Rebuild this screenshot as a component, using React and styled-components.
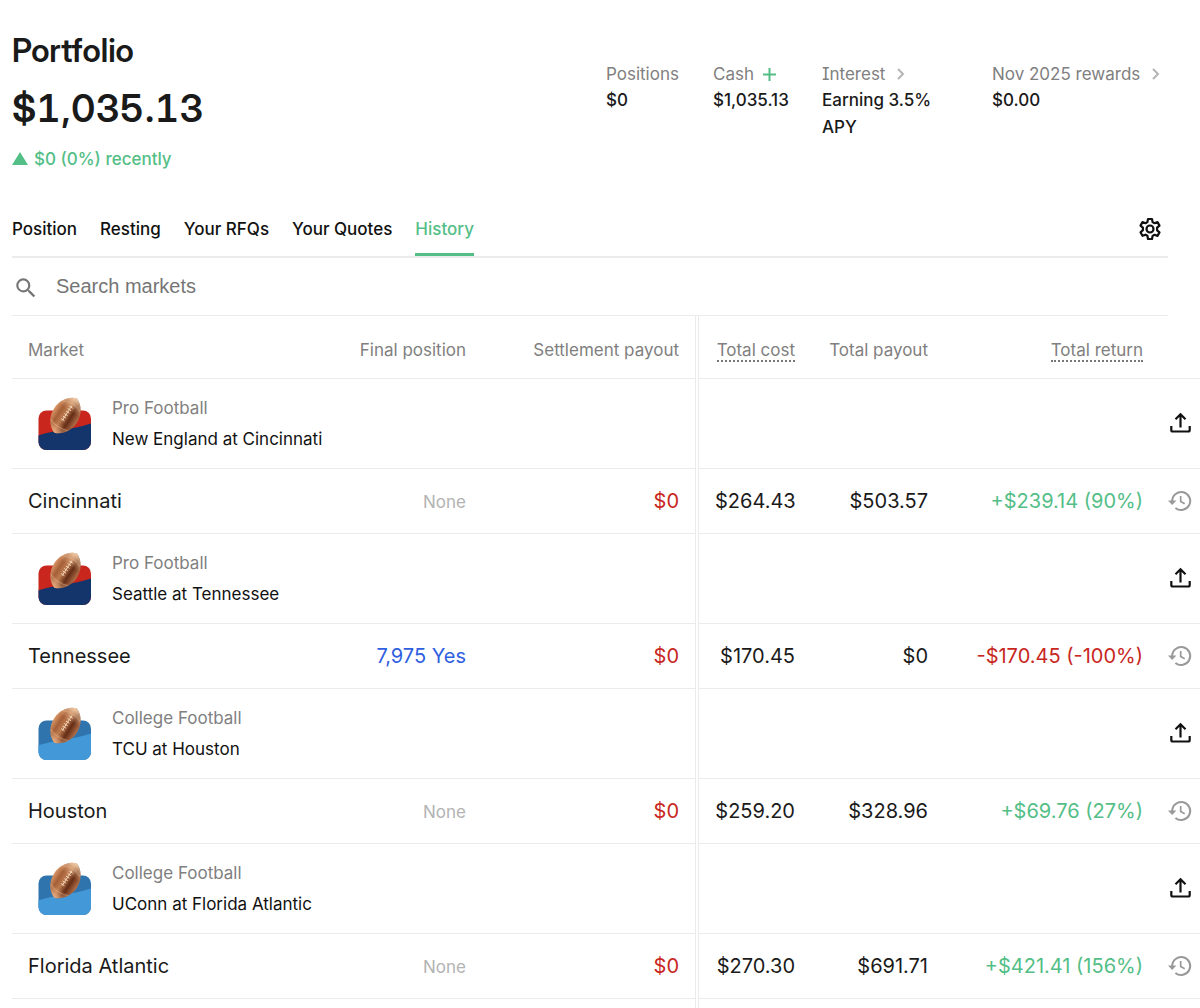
import React, { useId } from "react";
import styled, { createGlobalStyle } from "styled-components";

const GlobalStyle = createGlobalStyle`
  * {
    box-sizing: border-box;
  }
  body {
    margin: 0;
    background: #fff;
    color: #1a1a1a;
    font-family: Inter, "Liberation Sans", sans-serif;
    font-feature-settings: "cv08";
    font-size: 17px;
    line-height: 26px;
    overflow-x: hidden;
  }
  button, input {
    font: inherit;
    font-feature-settings: inherit;
    color: inherit;
    border: none;
    background: none;
    padding: 0;
  }
  h1, p, dl, dd {
    margin: 0;
  }
`;

const green = "#54be87";
const red = "#c8271e";
const gray = "#808080";
const line = "#ebebeb";

const Page = styled.main`
  padding-left: 12px;
`;

const Top = styled.div`
  margin-right: 32px;
`;

const Header = styled.header`
  display: flex;
  justify-content: space-between;
  padding-top: 30px;
`;

const Title = styled.h1`
  font-family: "Inter Display", Inter, sans-serif;
  font-size: 32px;
  line-height: 42px;
  font-weight: 600;
`;

const Balance = styled.p`
  font-family: "Inter Display", Inter, sans-serif;
  font-size: 38px;
  line-height: 56px;
  margin-top: 8px;
  font-weight: 600;
  font-variant-numeric: tabular-nums;
`;

const Change = styled.p`
  display: flex;
  align-items: center;
  gap: 6px;
  margin-top: 10px;
  font-weight: 500;
  color: ${green};
  svg {
    margin-bottom: 2px;
  }
`;

const Stats = styled.dl`
  display: flex;
  gap: 32px;
  padding-top: 31px;
`;

const Stat = styled.div`
  width: ${(props) => props.$width || "auto"};
`;

const StatLabel = styled.dt`
  display: flex;
  align-items: center;
  gap: 8px;
  color: ${gray};
  white-space: nowrap;
`;

const StatValue = styled.dd`
  line-height: 27px;
  font-weight: 500;
`;

const IconButton = styled.button`
  display: flex;
  align-items: center;
  justify-content: center;
  cursor: pointer;
  color: ${(props) => props.$color || "#111"};
`;

const Toolbar = styled.div`
  display: flex;
  justify-content: space-between;
  align-items: flex-start;
  margin-top: 43px;
  border-bottom: 2px solid ${line};
  height: 43px;
`;

const Tabs = styled.nav`
  display: flex;
  gap: 23px;
`;

const Tab = styled.button`
  height: 41px;
  padding-bottom: 10px;
  font-weight: 500;
  cursor: pointer;
  color: ${(props) => (props.$active ? green : "#111")};
  border-bottom: 3px solid ${(props) => (props.$active ? green : "transparent")};
`;

const Settings = styled(IconButton)`
  margin: 2px 6px 0 0;
`;

const Search = styled.label`
  display: flex;
  align-items: center;
  gap: 17px;
  height: 58px;
  padding-left: 1px;
  border-bottom: 1px solid ${line};
  color: #757575;
`;

const SearchInput = styled.input`
  flex: 1;
  min-width: 0;
  padding-bottom: 2px;
  font-family: "Liberation Sans", Arial, sans-serif;
  font-size: 20px;
  outline: none;
  &::placeholder {
    color: #757575;
  }
`;

const Table = styled.table`
  width: 100%;
  table-layout: fixed;
  border-collapse: separate;
  border-spacing: 0;
`;

const Col = styled.col`
  width: ${(props) => props.$width || "auto"};
`;

const Cell = styled.td`
  height: ${(props) => props.$height || 65}px;
  padding: 0 16px;
  border-bottom: 1px solid ${line};
  text-align: ${(props) => props.$align || "right"};
  font-size: 20px;
  white-space: nowrap;
  color: ${(props) => props.$color || "#1a1a1a"};
`;

const HeadCell = styled(Cell)`
  height: 63px;
  padding-top: 6px;
  font-size: 17px;
  font-weight: 400;
  color: ${gray};
`;

const ActionCell = styled(Cell)`
  padding: 0;
  ${IconButton} {
    margin: 0 auto;
  }
`;

const Divider = styled.td`
  padding: 0;
  border-left: 1px solid ${line};
  border-right: 1px solid ${line};
`;

const Hint = styled.span`
  display: inline-block;
  line-height: 20px;
  border-bottom: 2px dotted #777;
`;

const Muted = styled.span`
  font-size: 17px;
  color: #b3b3b3;
`;

const Event = styled.div`
  display: flex;
  align-items: center;
  gap: 21px;
  padding-left: 10px;
  font-size: 17px;
  line-height: 31px;
  svg {
    overflow: visible;
  }
`;

const League = styled.p`
  color: ${gray};
`;

const Name = styled.p`
  color: #111;
`;

const Chevron = () => (
  <svg width="16" height="18" viewBox="1 0 16 18" fill="none" stroke="#b5b5b5" strokeWidth="2">
    <path d="M6 4l5 5-5 5" />
  </svg>
);

const PlusIcon = () => (
  <svg width="15" height="15" viewBox="0 0 15 15" stroke={green} strokeWidth="2">
    <path d="M7.5 1v13M1 7.5h13" />
  </svg>
);

const UpIcon = () => (
  <svg width="16" height="13" viewBox="0 0 16 13" fill={green}>
    <path d="M8 0l8 13H0z" />
  </svg>
);

const SearchIcon = () => (
  <svg width="26" height="26" viewBox="0 -1 24 24" fill="currentColor">
    <path d="M15.5 14h-.79l-.28-.27A6.47 6.47 0 0 0 16 9.5 6.5 6.5 0 1 0 9.5 16c1.61 0 3.09-.59 4.23-1.57l.27.28v.79l5 4.99L20.49 19l-4.99-5zm-6 0C7.01 14 5 11.99 5 9.5S7.01 5 9.5 5 14 7.01 14 9.5 11.99 14 9.5 14z" />
  </svg>
);

const GearIcon = () => (
  <svg width="24" height="24" viewBox="0 0 24 24" fill="none" stroke="currentColor" strokeWidth="2.2" strokeLinejoin="round">
    <path d="M10 2h4l.6 3.1 1.9 1.1 3-1.1 2 3.5-2.4 2.1v2.6l2.4 2.1-2 3.5-3-1.1-1.9 1.1L14 22h-4l-.6-3.2-1.9-1.1-3 1.1-2-3.5 2.4-2.1v-2.6L2.5 8.6l2-3.5 3 1.1 1.9-1.1z" />
    <circle cx="12" cy="12" r="3.5" />
  </svg>
);

const ShareIcon = () => (
  <svg width="24" height="24" viewBox="-0.5 1.5 24 24" fill="none" stroke="currentColor" strokeWidth="2.2">
    <path d="M12 17V4M7 8.700l5-5 5 5M2.800 15.500v4a1.500 1.500 0 0 0 1.500 1.500h15.400a1.500 1.500 0 0 0 1.500-1.500v-4" />
  </svg>
);

const HistoryIcon = () => (
  <svg width="26" height="24" viewBox="0 0 26 24" fill="none" stroke="currentColor" strokeWidth="2">
    <path d="M5.200 13.500V12a9 9 0 1 1 3.200 6.900" />
    <path d="M1 11.500h8.400l-4.200 4.500z" fill="currentColor" stroke="none" />
    <path d="M13.700 7v5.500l4 2.300" strokeWidth="1.700" />
  </svg>
);

const ball = "M27.500-1.500C35 1 41 9 41 19S35 37 27.500 39.500C20 37 14 29 14 19S20 1 27.500-1.500z";

const FootballIcon = ({ college }) => {
  const id = useId();
  return (
    <svg width="53" height="54" viewBox="0 0.5 53 54">
      <defs>
        <linearGradient id={id + "ball"}>
          <stop offset="0" stopColor="#dc9768" />
          <stop offset="0.25" stopColor="#a45f38" />
          <stop offset="0.45" stopColor="#bd7b50" />
          <stop offset="0.7" stopColor="#642d16" />
          <stop offset="1" stopColor="#b4714a" />
        </linearGradient>
        <linearGradient id={id + "shine"} x2="0" y2="1">
          <stop offset="0" stopColor="#fbdcb9" stopOpacity="0.9" />
          <stop offset="0.35" stopColor="#f0c096" stopOpacity="0" />
          <stop offset="0.75" stopColor="#efb285" stopOpacity="0" />
          <stop offset="1" stopColor="#f3bc90" stopOpacity="0.8" />
        </linearGradient>
        <clipPath id={id + "card"}>
          <rect x="0.500" y="14" width="52.500" height="39.500" rx="8" />
        </clipPath>
      </defs>
      <g clipPath={`url(#${id}card)`}>
        <rect y="13" width="53" height="41" fill={college ? "#2f74ad" : "#c9271e"} />
        <path d="M0 39C15 34 35 33 53 27V54H0z" fill={college ? "#4398d8" : "#14356c"} />
      </g>
      <g transform="rotate(33 27.5 19)">
        <path d={ball} fill={`url(#${id}ball)`} />
        <path d={ball} fill={`url(#${id}shine)`} />
        <path d="M17.500 8q10-5 20 0M17 30q10 5 21 0" fill="none" stroke="#f2c096" opacity="0.4" />
        <path d="M27.500 7V25M25.500 9h4M25.500 12h4M25.500 15h4M25.500 18h4M25.500 21h4M25.500 24h4" stroke="#f3d5b7" strokeWidth="0.900" fill="none" />
      </g>
    </svg>
  );
};

const tabs = ["Position", "Resting", "Your RFQs", "Your Quotes", "History"];

const events = [
  {
    league: "Pro Football",
    name: "New England at Cincinnati",
    market: "Cincinnati",
    cost: "$264.43",
    payout: "$503.57",
    total: "+$239.14 (90%)",
  },
  {
    league: "Pro Football",
    name: "Seattle at Tennessee",
    market: "Tennessee",
    position: "7,975 Yes",
    cost: "$170.45",
    payout: "$0",
    total: "-$170.45 (-100%)",
  },
  {
    league: "College Football",
    name: "TCU at Houston",
    market: "Houston",
    cost: "$259.20",
    payout: "$328.96",
    total: "+$69.76 (27%)",
  },
  {
    league: "College Football",
    name: "UConn at Florida Atlantic",
    market: "Florida Atlantic",
    cost: "$270.30",
    payout: "$691.71",
    total: "+$421.41 (156%)",
  },
];

const EventRows = ({ item }) => (
  <>
    <tr>
      <Cell colSpan={3} $height={90} $align="left">
        <Event>
          <FootballIcon college={item.league === "College Football"} />
          <div>
            <League>{item.league}</League>
            <Name>{item.name}</Name>
          </div>
        </Event>
      </Cell>
      <Divider />
      <Cell colSpan={3} $height={90} />
      <ActionCell $height={90}>
        <IconButton aria-label={`Share ${item.name}`}>
          <ShareIcon />
        </IconButton>
      </ActionCell>
    </tr>
    <tr>
      <Cell $align="left">{item.market}</Cell>
      <Cell $color="#2f5fe0">{item.position || <Muted>None</Muted>}</Cell>
      <Cell $color={red}>$0</Cell>
      <Divider />
      <Cell>{item.cost}</Cell>
      <Cell>{item.payout}</Cell>
      <Cell $color={item.total.startsWith("+") ? green : red}>{item.total}</Cell>
      <ActionCell>
        <IconButton $color="#999" aria-label={`${item.market} trade history`}>
          <HistoryIcon />
        </IconButton>
      </ActionCell>
    </tr>
  </>
);

const App = () => {
  return (
    <Page>
      <GlobalStyle />
      <Top>
        <Header>
          <div>
            <Title>Portfolio</Title>
            <Balance>$1,035.13</Balance>
            <Change>
              <UpIcon />
              $0 (0%) recently
            </Change>
          </div>
          <Stats>
            <Stat $width="75px">
              <StatLabel>Positions</StatLabel>
              <StatValue>$0</StatValue>
            </Stat>
            <Stat $width="77px">
              <StatLabel>
                Cash
                <IconButton aria-label="Add cash">
                  <PlusIcon />
                </IconButton>
              </StatLabel>
              <StatValue>$1,035.13</StatValue>
            </Stat>
            <Stat $width="138px">
              <StatLabel>
                Interest <Chevron />
              </StatLabel>
              <StatValue>Earning 3.5% APY</StatValue>
            </Stat>
            <Stat $width="176px">
              <StatLabel>
                Nov 2025 rewards <Chevron />
              </StatLabel>
              <StatValue>$0.00</StatValue>
            </Stat>
          </Stats>
        </Header>
        <Toolbar>
          <Tabs>
            {tabs.map((tab) => (
              <Tab key={tab} $active={tab === "History"}>
                {tab}
              </Tab>
            ))}
          </Tabs>
          <Settings aria-label="Settings">
            <GearIcon />
          </Settings>
        </Toolbar>
        <Search>
          <SearchIcon />
          <SearchInput type="text" placeholder="Search markets" aria-label="Search markets" />
        </Search>
      </Top>
      <Table>
        <colgroup>
          <Col />
          <Col $width="150px" />
          <Col $width="213px" />
          <Col $width="4px" />
          <Col $width="112px" />
          <Col $width="133px" />
          <Col $width="215px" />
          <Col $width="41px" />
        </colgroup>
        <thead>
          <tr>
            <HeadCell as="th" $align="left">Market</HeadCell>
            <HeadCell as="th">Final position</HeadCell>
            <HeadCell as="th">Settlement payout</HeadCell>
            <Divider />
            <HeadCell as="th">
              <Hint>Total cost</Hint>
            </HeadCell>
            <HeadCell as="th">Total payout</HeadCell>
            <HeadCell as="th">
              <Hint>Total return</Hint>
            </HeadCell>
            <HeadCell />
          </tr>
        </thead>
        <tbody>
          {events.map((item) => (
            <EventRows key={item.name} item={item} />
          ))}
        </tbody>
        <tfoot>
          <tr>
            <Cell colSpan={3} $height={32} />
            <Divider />
            <Cell colSpan={4} $height={32} />
          </tr>
        </tfoot>
      </Table>
    </Page>
  );
};

export default App;
